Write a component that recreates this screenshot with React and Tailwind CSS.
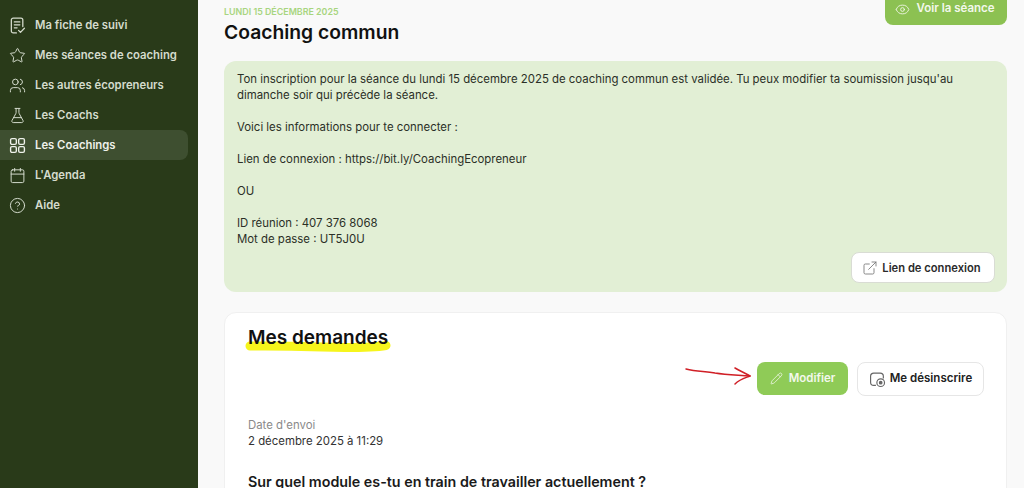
import React from "react";
import {
  Calendar,
  CircleHelp,
  ExternalLink,
  Eye,
  FlaskConical,
  Pencil,
  Star,
  Users,
} from "lucide-react";

const FicheIcon = ({ className }) => (
  <svg viewBox="0 0 16 16" className={className} fill="none" stroke="currentColor" strokeWidth="1.2" strokeLinecap="round" strokeLinejoin="round">
    <path d="M7 15H4A1.8 1.8 0 0 1 2.2 13.2V2.8A1.8 1.8 0 0 1 4 1h7.2A1.8 1.8 0 0 1 13 2.8V9" />
    <path d="M5 4.6h5.2M5 7.4h5.2M5 10.2h2.6" />
    <path d="M9 12.6l1.8 1.9 3.7-3.9" />
  </svg>
);

const GridIcon = ({ className }) => (
  <svg viewBox="0 0 16 16" className={className} fill="none" stroke="currentColor" strokeWidth="1.3">
    <rect x="1.5" y="1.5" width="5.4" height="5.4" rx="1.3" />
    <rect x="9.1" y="1.5" width="5.4" height="5.4" rx="1.3" />
    <rect x="1.5" y="9.1" width="5.4" height="5.4" rx="1.3" />
    <rect x="9.1" y="9.1" width="5.4" height="5.4" rx="1.3" />
  </svg>
);

const navItems = [
  { label: "Ma fiche de suivi", icon: FicheIcon },
  { label: "Mes séances de coaching", icon: Star },
  { label: "Les autres écopreneurs", icon: Users },
  { label: "Les Coachs", icon: FlaskConical },
  { label: "Les Coachings", icon: GridIcon, active: true },
  { label: "L'Agenda", icon: Calendar },
  { label: "Aide", icon: CircleHelp },
];

const Sidebar = () => (
  <aside className="flex h-[488px] w-[198px] shrink-0 flex-col bg-[#293a19] pr-[10px] pt-[10px]">
    {navItems.map((item) => (
      <div
        key={item.label}
        className={`flex h-[30px] items-center gap-[9px] rounded-r-lg pl-[9px] text-[11.3px] font-semibold text-[#d5dccd] ${
          item.active ? "bg-[#3e4f30] text-[#eef1ea]" : ""
        }`}
      >
        <item.icon className="h-[17px] w-[17px] shrink-0" strokeWidth={1.4} />
        <span className="whitespace-nowrap">{item.label}</span>
      </div>
    ))}
  </aside>
);

const Unsubscribe = () => (
  <svg viewBox="0 0 16 16" className="h-[17px] w-[17px] shrink-0 text-[#666]" fill="none" stroke="currentColor" strokeWidth="1.1">
    <path d="M6.5 13.5H4.5A3 3 0 0 1 1.5 10.5V5A3 3 0 0 1 4.5 2h6a3 3 0 0 1 3 3V7" />
    <circle cx="11" cy="11" r="3.6" />
    <circle cx="11" cy="11" r="1.2" fill="currentColor" />
  </svg>
);

const App = () => {
  return (
    <div className="flex h-[488px] w-[1024px] overflow-hidden bg-[#f9f9f9] font-['Inter',sans-serif]">
      <Sidebar />
      <main className="min-w-0 flex-1 pl-[26px] pr-[17px]">
        {/* Header */}
        <div className="flex h-[45px] items-start justify-between">
          <div className="pt-[6px]">
            <p className="text-[8.9px] font-semibold uppercase leading-[11px] text-[#a8d57f]">
              Lundi 15 décembre 2025
            </p>
            <h1 className="mt-[2px] text-[19.3px] font-semibold leading-[26px] text-[#111]">
              Coaching commun
            </h1>
          </div>
          <div className="flex h-[25px] w-[122px] shrink-0 items-center justify-center gap-[6px] rounded-b-lg bg-[#8cc152] pb-[8px] pr-[2px] pt-[1px] text-[11.5px] font-semibold text-[#f3f8ec]">
            <Eye className="h-[15px] w-[15px]" strokeWidth={1.4} />
            Voir la séance
          </div>
        </div>

        {/* Confirmation */}
        <section className="mt-[16px] h-[231px] rounded-xl bg-[#e2efd5] pl-[13px] pr-[12px] pt-[10px] text-[11.4px] leading-[16px] text-[#2b2f27]">
          <p>
            Ton inscription pour la séance du lundi 15 décembre 2025 de coaching commun est validée. Tu peux modifier ta soumission jusqu'au
            <br />
            dimanche soir qui précède la séance.
          </p>
          <p className="mt-[16px]">Voici les informations pour te connecter :</p>
          <p className="mt-[16px]">Lien de connexion : https://bit.ly/CoachingEcopreneur</p>
          <p className="mt-[16px]">OU</p>
          <p className="mt-[16px]">ID réunion : 407 376 8068</p>
          <p>Mot de passe : UT5J0U</p>
          <div className="mt-[5px] flex justify-end">
            <button className="flex h-[31px] w-[144px] items-center justify-center gap-[4px] rounded-lg border border-[#d9dcd4] bg-white pr-[3px] text-[11.2px] font-semibold text-[#2a2a2a]">
              <ExternalLink className="h-[16px] w-[16px] text-[#777]" strokeWidth={1.3} />
              Lien de connexion
            </button>
          </div>
        </section>

        {/* Demandes */}
        <section className="mt-[20px] h-[200px] rounded-t-xl border border-[#f0f0f0] bg-white pl-[23px] pr-[22px] pt-[13px]">
          <div className="relative inline-block">
            <svg viewBox="0 0 146 14" className="absolute left-[-3px] top-[11px] h-[14px] w-[146px] overflow-visible" fill="none">
              <path d="M5 9C40 8.5 70 9.5 100 10.5C118 10.5 132 10 141 8.5" stroke="#f6f51c" strokeWidth="9" strokeLinecap="round" />
            </svg>
            <h2 className="relative text-[19px] font-semibold leading-[24px] text-[#111]">Mes demandes</h2>
          </div>

          <div className="relative mt-[12px] flex justify-end gap-[9px]">
            <svg viewBox="0 0 68 20" className="absolute left-[437px] top-[5px] h-[20px] w-[68px]" fill="none" stroke="#d01f26" strokeWidth="1.5" strokeLinecap="round" strokeLinejoin="round">
              <path d="M1 2C12 5 20 4 30 6C42 8 54 8 65 9" />
              <path d="M50 1C55 4 60 6 65 9C60 11 55 12 50 17" />
            </svg>
            <button className="flex h-[33px] w-[91px] items-center justify-center gap-[6px] rounded-lg bg-[#8fcb57] text-[11.5px] font-semibold text-[#f3f8ec]">
              <Pencil className="h-[13px] w-[13px]" strokeWidth={1.4} />
              Modifier
            </button>
            <button className="flex h-[34px] w-[127px] items-center justify-center gap-[4px] rounded-lg border border-[#e6e6e6] bg-white text-[11.5px] font-semibold text-[#222]">
              <Unsubscribe />
              Me désinscrire
            </button>
          </div>

          <p className="mt-[21px] text-[11.4px] leading-[16px] text-[#8a8a8a]">Date d'envoi</p>
          <p className="text-[11.4px] leading-[16px] text-[#333]">2 décembre 2025 à 11:29</p>
          <p className="mt-[26px] text-[14.3px] font-semibold leading-[14px] text-[#1a1a1a]">
            Sur quel module es-tu en train de travailler actuellement ?
          </p>
        </section>
      </main>
    </div>
  );
};

export default App;
